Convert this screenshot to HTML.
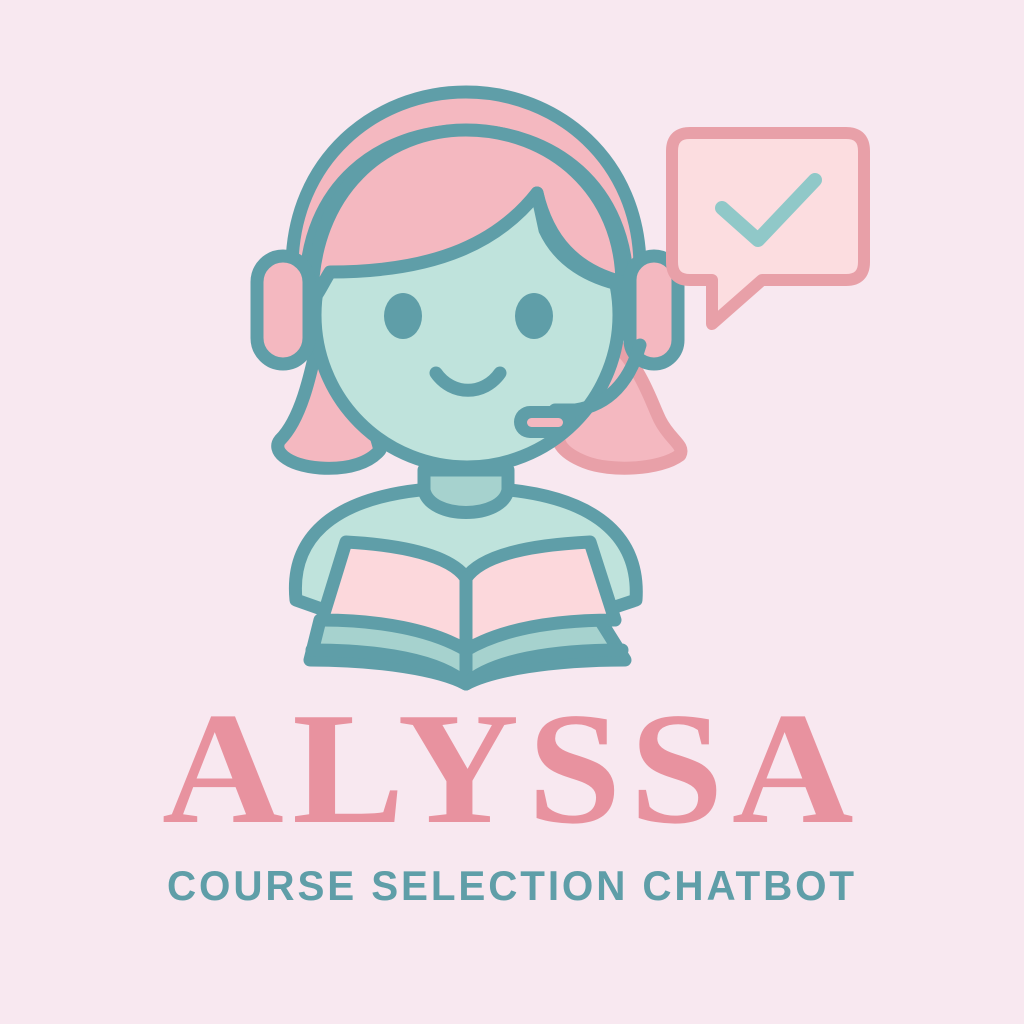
<!DOCTYPE html>
<html><head><meta charset="utf-8"><style>
html,body{margin:0;padding:0;background:#f8e8f0;}
body{width:1024px;height:1024px;overflow:hidden;position:relative;}
svg{position:absolute;left:0;top:0;}
</style></head><body>
<svg width="1024" height="1024" viewBox="0 0 1024 1024">
<rect width="1024" height="1024" fill="#f8e8f0"/>
<g stroke-linejoin="round" stroke-linecap="round">
<path d="M600,330 C640,360 650,400 660,420 C670,440 685,445 680,455 C660,470 610,472 585,462 C560,452 555,440 560,430 Z" fill="#f4b8c0" stroke="#e8a0a8" stroke-width="13"/>
<path d="M320,330 C310,380 300,420 280,440 C272,450 285,465 320,468 C350,470 370,462 380,450 L360,380 Z" fill="#f4b8c0" stroke="#5f9ea8" stroke-width="13"/>
<path d="M292,268 C292,160 375,92 466,92 C557,92 640,160 640,268" fill="#f4b8c0" stroke="#5f9ea8" stroke-width="13"/>
<path d="M305,290 C305,185 380,130 466,130 C552,130 628,185 628,290 Z" fill="#f4b8c0" stroke="#5f9ea8" stroke-width="12"/>
<circle cx="467" cy="315" r="152" fill="#bfe3dc" stroke="#5f9ea8" stroke-width="13"/>
<path d="M312,300 C312,190 385,130 466,130 C550,130 622,190 622,285 C590,278 560,262 545,230 L537,193 C500,240 440,272 330,272 C322,285 318,295 312,300 Z" fill="#f4b8c0" stroke="#5f9ea8" stroke-width="13"/>
<path d="M537,193 C548,240 575,270 622,282" fill="none" stroke="#5f9ea8" stroke-width="13"/>
<rect x="257" y="256" width="52" height="108" rx="26" fill="#f4b8c0" stroke="#5f9ea8" stroke-width="13"/>
<rect x="630" y="256" width="48" height="108" rx="24" fill="#f4b8c0" stroke="#5f9ea8" stroke-width="13"/>
<ellipse cx="403" cy="316" rx="19" ry="23" fill="#5f9ea8"/>
<ellipse cx="534" cy="316" rx="19" ry="23" fill="#5f9ea8"/>
<path d="M436,373 C452,396 484,396 500,373" fill="none" stroke="#5f9ea8" stroke-width="13"/>
<path d="M640,345 C630,380 610,405 575,410 L555,410" fill="none" stroke="#5f9ea8" stroke-width="13"/>
<rect x="514" y="406" width="62" height="32" rx="16" fill="#5f9ea8"/>
<rect x="527" y="418" width="36" height="9" rx="4.5" fill="#f4b8c0"/>
<path d="M296,600 C290,540 330,500 420,490 L510,490 C600,500 640,540 636,600 L600,612 L330,612 Z" fill="#bfe3dc" stroke="#5f9ea8" stroke-width="13"/>
<path d="M424,470 L424,490 C430,520 502,520 508,490 L508,470 Z" fill="#a6d2ce" stroke="#5f9ea8" stroke-width="13"/>
<path d="M310,660 C380,660 440,670 466,684 C492,670 552,660 625,660 L600,620 L320,620 Z" fill="#a6d2ce" stroke="#5f9ea8" stroke-width="13"/>
<path d="M346,542 C400,545 450,555 466,578 C482,555 530,545 590,542 L615,620 C550,620 500,630 466,650 C432,630 380,620 322,620 Z" fill="#fcd8dc" stroke="#5f9ea8" stroke-width="13"/>
<line x1="466" y1="578" x2="466" y2="680" stroke="#5f9ea8" stroke-width="13"/>
<path d="M312,650 C380,650 440,660 466,684 C492,660 552,650 622,650" fill="none" stroke="#5f9ea8" stroke-width="13"/>
<path d="M690,133 L846,133 Q864,133 864,151 L864,262 Q864,280 846,280 L762,280 L712,324 L712,280 L690,280 Q672,280 672,262 L672,151 Q672,133 690,133 Z" fill="#fcdde0" stroke="#e8a0a8" stroke-width="12"/>
<path d="M722,208 L758,240 L815,180" fill="none" stroke="#90c8c8" stroke-width="14"/>
</g>
<text x="512" y="822" text-anchor="middle" font-family="Liberation Serif, serif" font-weight="bold" font-size="160" fill="#e8929f" letter-spacing="8" textLength="700" lengthAdjust="spacingAndGlyphs">ALYSSA</text>
<text x="512" y="900" text-anchor="middle" font-family="Liberation Sans, sans-serif" font-weight="bold" font-size="42" fill="#5f9ea8" letter-spacing="3" textLength="690" lengthAdjust="spacingAndGlyphs">COURSE SELECTION CHATBOT</text>
</svg>
</body></html>
